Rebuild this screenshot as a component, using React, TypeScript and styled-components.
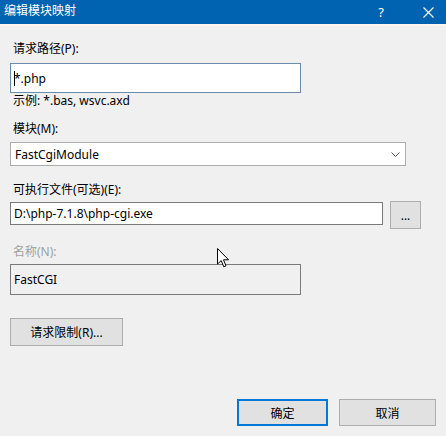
import styled, { createGlobalStyle } from "styled-components";

const Global = createGlobalStyle`
    html, body {
        margin: 0;
        padding: 0;
        background: #f0f0f0;
    }
    * {
        box-sizing: border-box;
    }
`;

const Window = styled.div`
    position: relative;
    width: 446px;
    height: 436px;
    display: flex;
    flex-direction: column;
    background: #f0f0f0;
    font-family: "Noto Sans", "Noto Sans CJK SC", sans-serif;
    font-size: 12px;
    color: #000;
    overflow: hidden;
`;

const TitleBar = styled.div`
    height: 26px;
    display: flex;
    align-items: center;
    gap: 12px;
    background: #0063b1;
    border-bottom: 2px solid #fbf6ef;
    color: #fff;
    padding: 0 0 0 4px;
`;

const Title = styled.div`
    flex: 1;
    line-height: 16px;
    margin-top: -2px;
`;

const TitleButton = styled.div<{ $w: number }>`
    width: ${(p) => p.$w}px;
    height: 24px;
    display: flex;
    align-items: center;
    justify-content: center;
    font-size: 13px;
`;

const Content = styled.div`
    flex: 1;
    display: flex;
    flex-direction: column;
    padding: 15px 0 10px 10px;
`;

const Label = styled.div<{ $disabled?: boolean; $gap?: number }>`
    line-height: 16px;
    padding-left: 3px;
    margin-top: ${(p) => p.$gap ?? 0}px;
    color: ${(p) => (p.$disabled ? "#a0a0a0" : "#000")};
`;

const Field = styled.div<{ $w: number; $h: number; $top?: number; $focus?: boolean; $disabled?: boolean }>`
    width: ${(p) => p.$w}px;
    height: ${(p) => p.$h}px;
    margin-top: ${(p) => p.$top ?? 0}px;
    display: flex;
    align-items: center;
    padding-left: 3px;
    background: ${(p) => (p.$disabled ? "#f0f0f0" : "#fff")};
    border: 1px solid ${(p) => (p.$focus ? "#6b8cad" : "#7a7a7a")};
    white-space: pre;
`;

const Caret = styled.span`
    display: inline-block;
    width: 1px;
    height: 15px;
    background: #000;
    margin-right: -1px;
`;

const Select = styled(Field)`
    justify-content: space-between;
    padding-right: 5px;
    padding-left: 4px;
    border-color: #adadad;
`;

const Hint = styled.div`
    line-height: 16px;
    padding-left: 3px;
`;

const Row = styled.div<{ $top?: number }>`
    display: flex;
    align-items: flex-start;
    gap: 7px;
    margin-top: ${(p) => p.$top ?? 3}px;
`;

const Button = styled.div<{ $w: number; $h: number; $default?: boolean }>`
    width: ${(p) => p.$w}px;
    height: ${(p) => p.$h}px;
    display: flex;
    align-items: center;
    justify-content: center;
    background: #e1e1e1;
    border: ${(p) => (p.$default ? "2px solid #0078d7" : "1px solid #adadad")};
`;

const Footer = styled.div`
    margin-top: auto;
    display: flex;
    justify-content: flex-end;
    gap: 11px;
    padding-right: 10px;
`;

const Pointer = styled.svg`
    position: absolute;
    left: 217px;
    top: 248px;
`;

export default function App() {
    return (
        <Window>
            <Global />
            <TitleBar>
                <Title>编辑模块映射</Title>
                <TitleButton $w={36}>?</TitleButton>
                <TitleButton $w={35}>
                    <svg width="11" height="11" viewBox="0 0 11 11">
                        <path d="M0.5 0.5 L10.5 10.5 M10.5 0.5 L0.5 10.5" stroke="#fff" strokeWidth="1.1" />
                    </svg>
                </TitleButton>
            </TitleBar>
            <Content>
                <Label>请求路径(P):</Label>
                <Field $w={291} $h={30} $top={6} $focus>
                    <Caret />
                    {"*.php"}
                </Field>
                <Hint>示例: *.bas, wsvc.axd</Hint>

                <Label $gap={12}>模块(M):</Label>
                <Select $w={396} $h={24} $top={5}>
                    <span>FastCgiModule</span>
                    <svg width="9" height="5" viewBox="0 0 9 5">
                        <path d="M0.5 0.5 L4.5 4.5 L8.5 0.5" stroke="#555" fill="none" strokeWidth="1" />
                    </svg>
                </Select>

                <Label $gap={16}>可执行文件(可选)(E):</Label>
                <Row>
                    <Field $w={373} $h={23} $top={1}>
                        {"D:\\php-7.1.8\\php-cgi.exe"}
                    </Field>
                    <Button $w={31} $h={28}>...</Button>
                </Row>

                <Label $disabled $gap={15}>名称(N):</Label>
                <Field $w={291} $h={31} $top={4} $disabled>
                    FastCGI
                </Field>

                <Row $top={23}>
                    <Button $w={113} $h={28}>请求限制(R)...</Button>
                </Row>

                <Footer>
                    <Button $w={91} $h={27} $default>确定</Button>
                    <Button $w={97} $h={27}>取消</Button>
                </Footer>
            </Content>
            <Pointer width="13" height="20" viewBox="0 0 13 20">
                <path
                    d="M0.5 0.5 L0.5 16 L4.2 12.6 L6.8 18.8 L9 17.9 L6.5 11.8 L11.6 11.8 Z"
                    fill="#fff"
                    stroke="#000"
                    strokeWidth="1"
                    strokeLinejoin="miter"
                />
            </Pointer>
        </Window>
    );
}
